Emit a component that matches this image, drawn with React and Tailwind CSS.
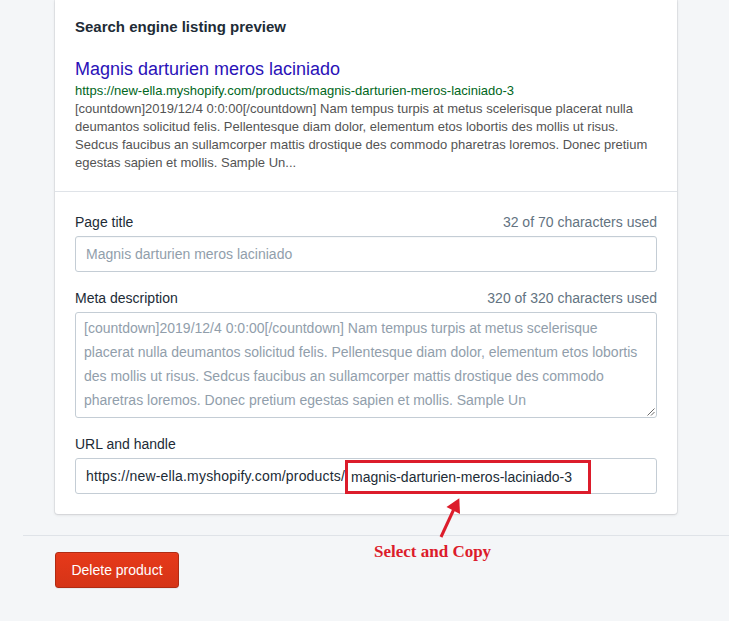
import React from 'react'

const sans = { fontFamily: '"Liberation Sans", Arial, sans-serif' }

const previewLines = [
  '[countdown]2019/12/4 0:0:00[/countdown] Nam tempus turpis at metus scelerisque placerat nulla',
  'deumantos solicitud felis. Pellentesque diam dolor, elementum etos lobortis des mollis ut risus.',
  'Sedcus faucibus an sullamcorper mattis drostique des commodo pharetras loremos. Donec pretium',
  'egestas sapien et mollis. Sample Un...',
]

const metaLines = [
  '[countdown]2019/12/4 0:0:00[/countdown] Nam tempus turpis at metus scelerisque',
  'placerat nulla deumantos solicitud felis. Pellentesque diam dolor, elementum etos lobortis',
  'des mollis ut risus. Sedcus faucibus an sullamcorper mattis drostique des commodo',
  'pharetras loremos. Donec pretium egestas sapien et mollis. Sample Un',
]

function FieldLabel({ label, count }) {
  return (
    <div className="flex justify-between text-sm leading-5 mb-1">
      <span className="text-[#212b36]">{label}</span>
      {count && <span className="text-[#637381]">{count}</span>}
    </div>
  )
}

export default function App() {
  return (
    <div className="relative min-h-[621px] w-full bg-[#f4f6f8] overflow-hidden" style={sans}>
      <div className="ml-[55px] w-[622px] bg-white rounded-b-[3px] shadow-[0_0_0_1px_rgba(63,63,68,0.07),0_1px_3px_0_rgba(63,63,68,0.15)]">
        <div className="px-5 pt-[17px] pb-[19px] border-b border-[#dfe3e8]">
          <h2 className="text-[15px] leading-5 font-semibold text-[#212b36]">Search engine listing preview</h2>
          <div className="mt-5 text-[18px] leading-6 text-[#2a12b8]">Magnis darturien meros laciniado</div>
          <div className="text-[13px] leading-[19px] text-[#006621]">
            https://new-ella.myshopify.com/products/magnis-darturien-meros-laciniado-3
          </div>
          <div className="text-[13px] leading-[18px] text-[#545454]">
            {previewLines.map((l, i) => (
              <div key={i} className="whitespace-nowrap">{l}</div>
            ))}
          </div>
        </div>

        <div className="px-5 pt-5 pb-5">
          <FieldLabel label="Page title" count="32 of 70 characters used" />
          <div className="h-9 border border-[#c4cdd5] rounded-[3px] pl-[10px] flex items-center text-sm text-[#919eab] shadow-[inset_0_1px_0_0_rgba(99,115,129,0.05)]">
            Magnis darturien meros laciniado
          </div>

          <div className="mt-4">
            <FieldLabel label="Meta description" count="320 of 320 characters used" />
            <div className="relative h-[106px] border border-[#c4cdd5] rounded-[3px] pl-2 pt-[3px] text-sm leading-6 text-[#919eab]">
              {metaLines.map((l, i) => (
                <div key={i} className="whitespace-nowrap">{l}</div>
              ))}
              <svg className="absolute right-[1px] bottom-[1px]" width="9" height="9" viewBox="0 0 9 9">
                <path d="M8.5 1.5 L1.5 8.5 M8.5 5 L5 8.5" stroke="#6b6b6b" strokeWidth="1" fill="none" />
              </svg>
            </div>
          </div>

          <div className="mt-4">
            <FieldLabel label="URL and handle" />
            <div className="h-9 border border-[#c4cdd5] rounded-[3px] pl-[10px] flex items-start text-sm text-[#212b36] whitespace-nowrap">
              <span className="leading-[34px] tracking-[0.18px]">https://new-ella.myshopify.com/products/</span>
              <span className="mt-px h-[34px] border-[3px] border-[#dc1c2b] pl-[3px] pr-[16px] leading-[28px]">
                magnis-darturien-meros-laciniado-3
              </span>
            </div>
          </div>
        </div>
      </div>

      <div className="mt-[21px] ml-[23px] border-t border-[#dfe3e8] pt-4 pl-[32px]">
        <button className="h-9 w-[124px] rounded-[3px] border border-[#b02b13] bg-gradient-to-b from-[#e6391a] to-[#d53417] text-white text-sm shadow-[inset_0_1px_0_0_#e73d1f,0_1px_0_0_rgba(22,29,37,0.05)]">
          Delete product
        </button>
      </div>

      {/* annotation */}
      <svg className="absolute left-[435px] top-[495px] pointer-events-none" width="30" height="45" viewBox="0 0 30 45">
        <path d="M6 42 L18.5 15" stroke="#dc1c2b" strokeWidth="3" strokeLinecap="butt" fill="none" />
        <polygon points="24.3,3.3 11.5,12 25,19" fill="#dc1c2b" />
      </svg>
      <div
        className="absolute left-[374px] top-[542px] text-[17px] leading-5 font-bold text-[#dc1c2b] whitespace-nowrap"
        style={{ fontFamily: '"Liberation Serif", "Times New Roman", serif' }}
      >
        Select and Copy
      </div>
    </div>
  )
}
